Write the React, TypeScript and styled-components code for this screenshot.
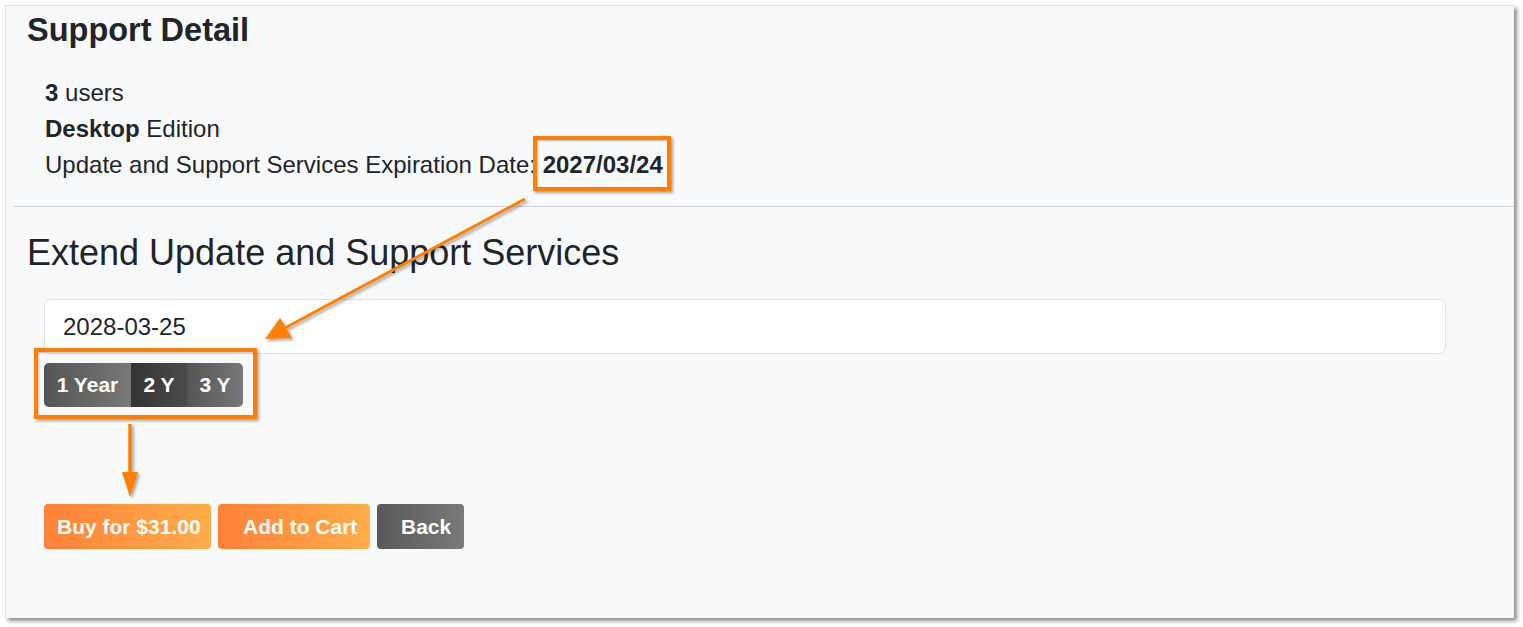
import React from "react";
import styled, { createGlobalStyle } from "styled-components";

const Global = createGlobalStyle`
  html, body { margin: 0; padding: 0; background: #ffffff; }
  body { font-family: "Liberation Sans", Arial, sans-serif; color: #212529; }
`;

const Stage = styled.div`
  position: relative;
  width: 1523px;
  height: 627px;
  padding: 5px 0 0 5px;
  box-sizing: border-box;
`;

const Panel = styled.div`
  width: 1509px;
  height: 613px;
  background: #f8f9fa;
  box-sizing: border-box;
  border-top: 1px solid #e4e4e4;
  border-left: 1px solid #e4e4e4;
  box-shadow: 3px 3px 4px rgba(0, 0, 0, 0.45);
  display: flex;
  flex-direction: column;
`;

const Title = styled.h3`
  margin: 4px 0 0 21px;
  font-size: 32.5px;
  line-height: 40px;
  font-weight: 700;
`;

const InfoList = styled.div`
  margin: 25px 0 0 39px;
  font-size: 24px;
  line-height: 36px;
`;

const InfoLine = styled.div``;

const Divider = styled.hr`
  margin: 23px 0 0 8px;
  border: 0;
  border-top: 1px solid #cfd2d6;
`;

const SectionTitle = styled.h4`
  margin: 26px 0 0 21px;
  font-size: 36px;
  line-height: 40px;
  font-weight: 400;
`;

const Form = styled.div`
  margin: 26px 0 0 38px;
  display: flex;
  flex-direction: column;
  align-items: flex-start;
`;

const DateInput = styled.div`
  width: 1402px;
  height: 55px;
  box-sizing: border-box;
  background: #ffffff;
  border: 1px solid #dee2e6;
  border-radius: 7px;
  padding: 0 18px;
  display: flex;
  align-items: center;
  font-size: 24px;
`;

const Group = styled.div`
  margin-top: 9px;
  display: flex;
  border-radius: 5px;
  overflow: hidden;
`;

const Seg = styled.div<{ $active?: boolean; $w: number }>`
  width: ${(p) => p.$w}px;
  height: 44px;
  display: flex;
  align-items: center;
  justify-content: center;
  color: #fff;
  font-weight: 700;
  font-size: 21px;
  background: ${(p) =>
    p.$active
      ? "linear-gradient(90deg, #333333, #4b4b4b)"
      : "linear-gradient(90deg, #555555, #787878)"};
`;

const Actions = styled.div`
  margin-top: 97px;
  display: flex;
  gap: 7px;
`;

const Btn = styled.div<{ $kind: "orange" | "gray"; $w: number; $pl: number }>`
  width: ${(p) => p.$w}px;
  height: 45px;
  box-sizing: border-box;
  padding-left: ${(p) => p.$pl}px;
  display: flex;
  align-items: center;
  border-radius: 4px;
  color: #fff;
  font-weight: 700;
  font-size: 21px;
  white-space: nowrap;
  background: ${(p) =>
    p.$kind === "orange"
      ? "linear-gradient(90deg, #ff8038, #ffad4a)"
      : "linear-gradient(90deg, #585858, #7a7a7a)"};
`;

const Highlight = styled.div<{ $x: number; $y: number; $w: number; $h: number }>`
  position: absolute;
  left: ${(p) => p.$x}px;
  top: ${(p) => p.$y}px;
  width: ${(p) => p.$w}px;
  height: ${(p) => p.$h}px;
  box-sizing: border-box;
  border: 4px solid #ff7f00;
  box-shadow: 2px 2px 3px rgba(0, 0, 0, 0.35), inset 1px 1px 2px rgba(0, 0, 0, 0.25);
  pointer-events: none;
`;

const Overlay = styled.svg`
  position: absolute;
  left: 0;
  top: 0;
  width: 1523px;
  height: 627px;
  pointer-events: none;
`;

export default function App() {
  return (
    <>
      <Global />
      <Stage>
        <Panel>
          <Title>Support Detail</Title>
          <InfoList>
            <InfoLine>
              <b>3</b> users
            </InfoLine>
            <InfoLine>
              <b>Desktop</b> Edition
            </InfoLine>
            <InfoLine>
              Update and Support Services Expiration Date: <b>2027/03/24</b>
            </InfoLine>
          </InfoList>
          <Divider />
          <SectionTitle>Extend Update and Support Services</SectionTitle>
          <Form>
            <DateInput>2028-03-25</DateInput>
            <Group>
              <Seg $w={87}>1 Year</Seg>
              <Seg $w={56} $active>
                2 Y
              </Seg>
              <Seg $w={56}>3 Y</Seg>
            </Group>
            <Actions>
              <Btn $kind="orange" $w={167} $pl={13}>
                Buy for $31.00
              </Btn>
              <Btn $kind="orange" $w={152} $pl={25}>
                Add to Cart
              </Btn>
              <Btn $kind="gray" $w={87} $pl={24}>
                Back
              </Btn>
            </Actions>
          </Form>
        </Panel>
        <Highlight $x={533} $y={136} $w={138} $h={55} />
        <Highlight $x={34} $y={348} $w={223} $h={71} />
        <Overlay viewBox="0 0 1523 627">
          <defs>
            <filter id="sh" x="-20%" y="-20%" width="140%" height="140%">
              <feDropShadow dx="2" dy="2" stdDeviation="1.5" floodColor="#000" floodOpacity="0.35" />
            </filter>
          </defs>
          <g filter="url(#sh)" fill="#ff7f00" stroke="#ff7f00">
            <line x1="525" y1="199" x2="285" y2="328" strokeWidth="3" />
            <polygon points="265,339 280,318 292,338" strokeWidth="0" />
            <line x1="130" y1="424" x2="130" y2="476" strokeWidth="3.5" />
            <polygon points="122,472 138,472 130,497" strokeWidth="0" />
          </g>
        </Overlay>
      </Stage>
    </>
  );
}
